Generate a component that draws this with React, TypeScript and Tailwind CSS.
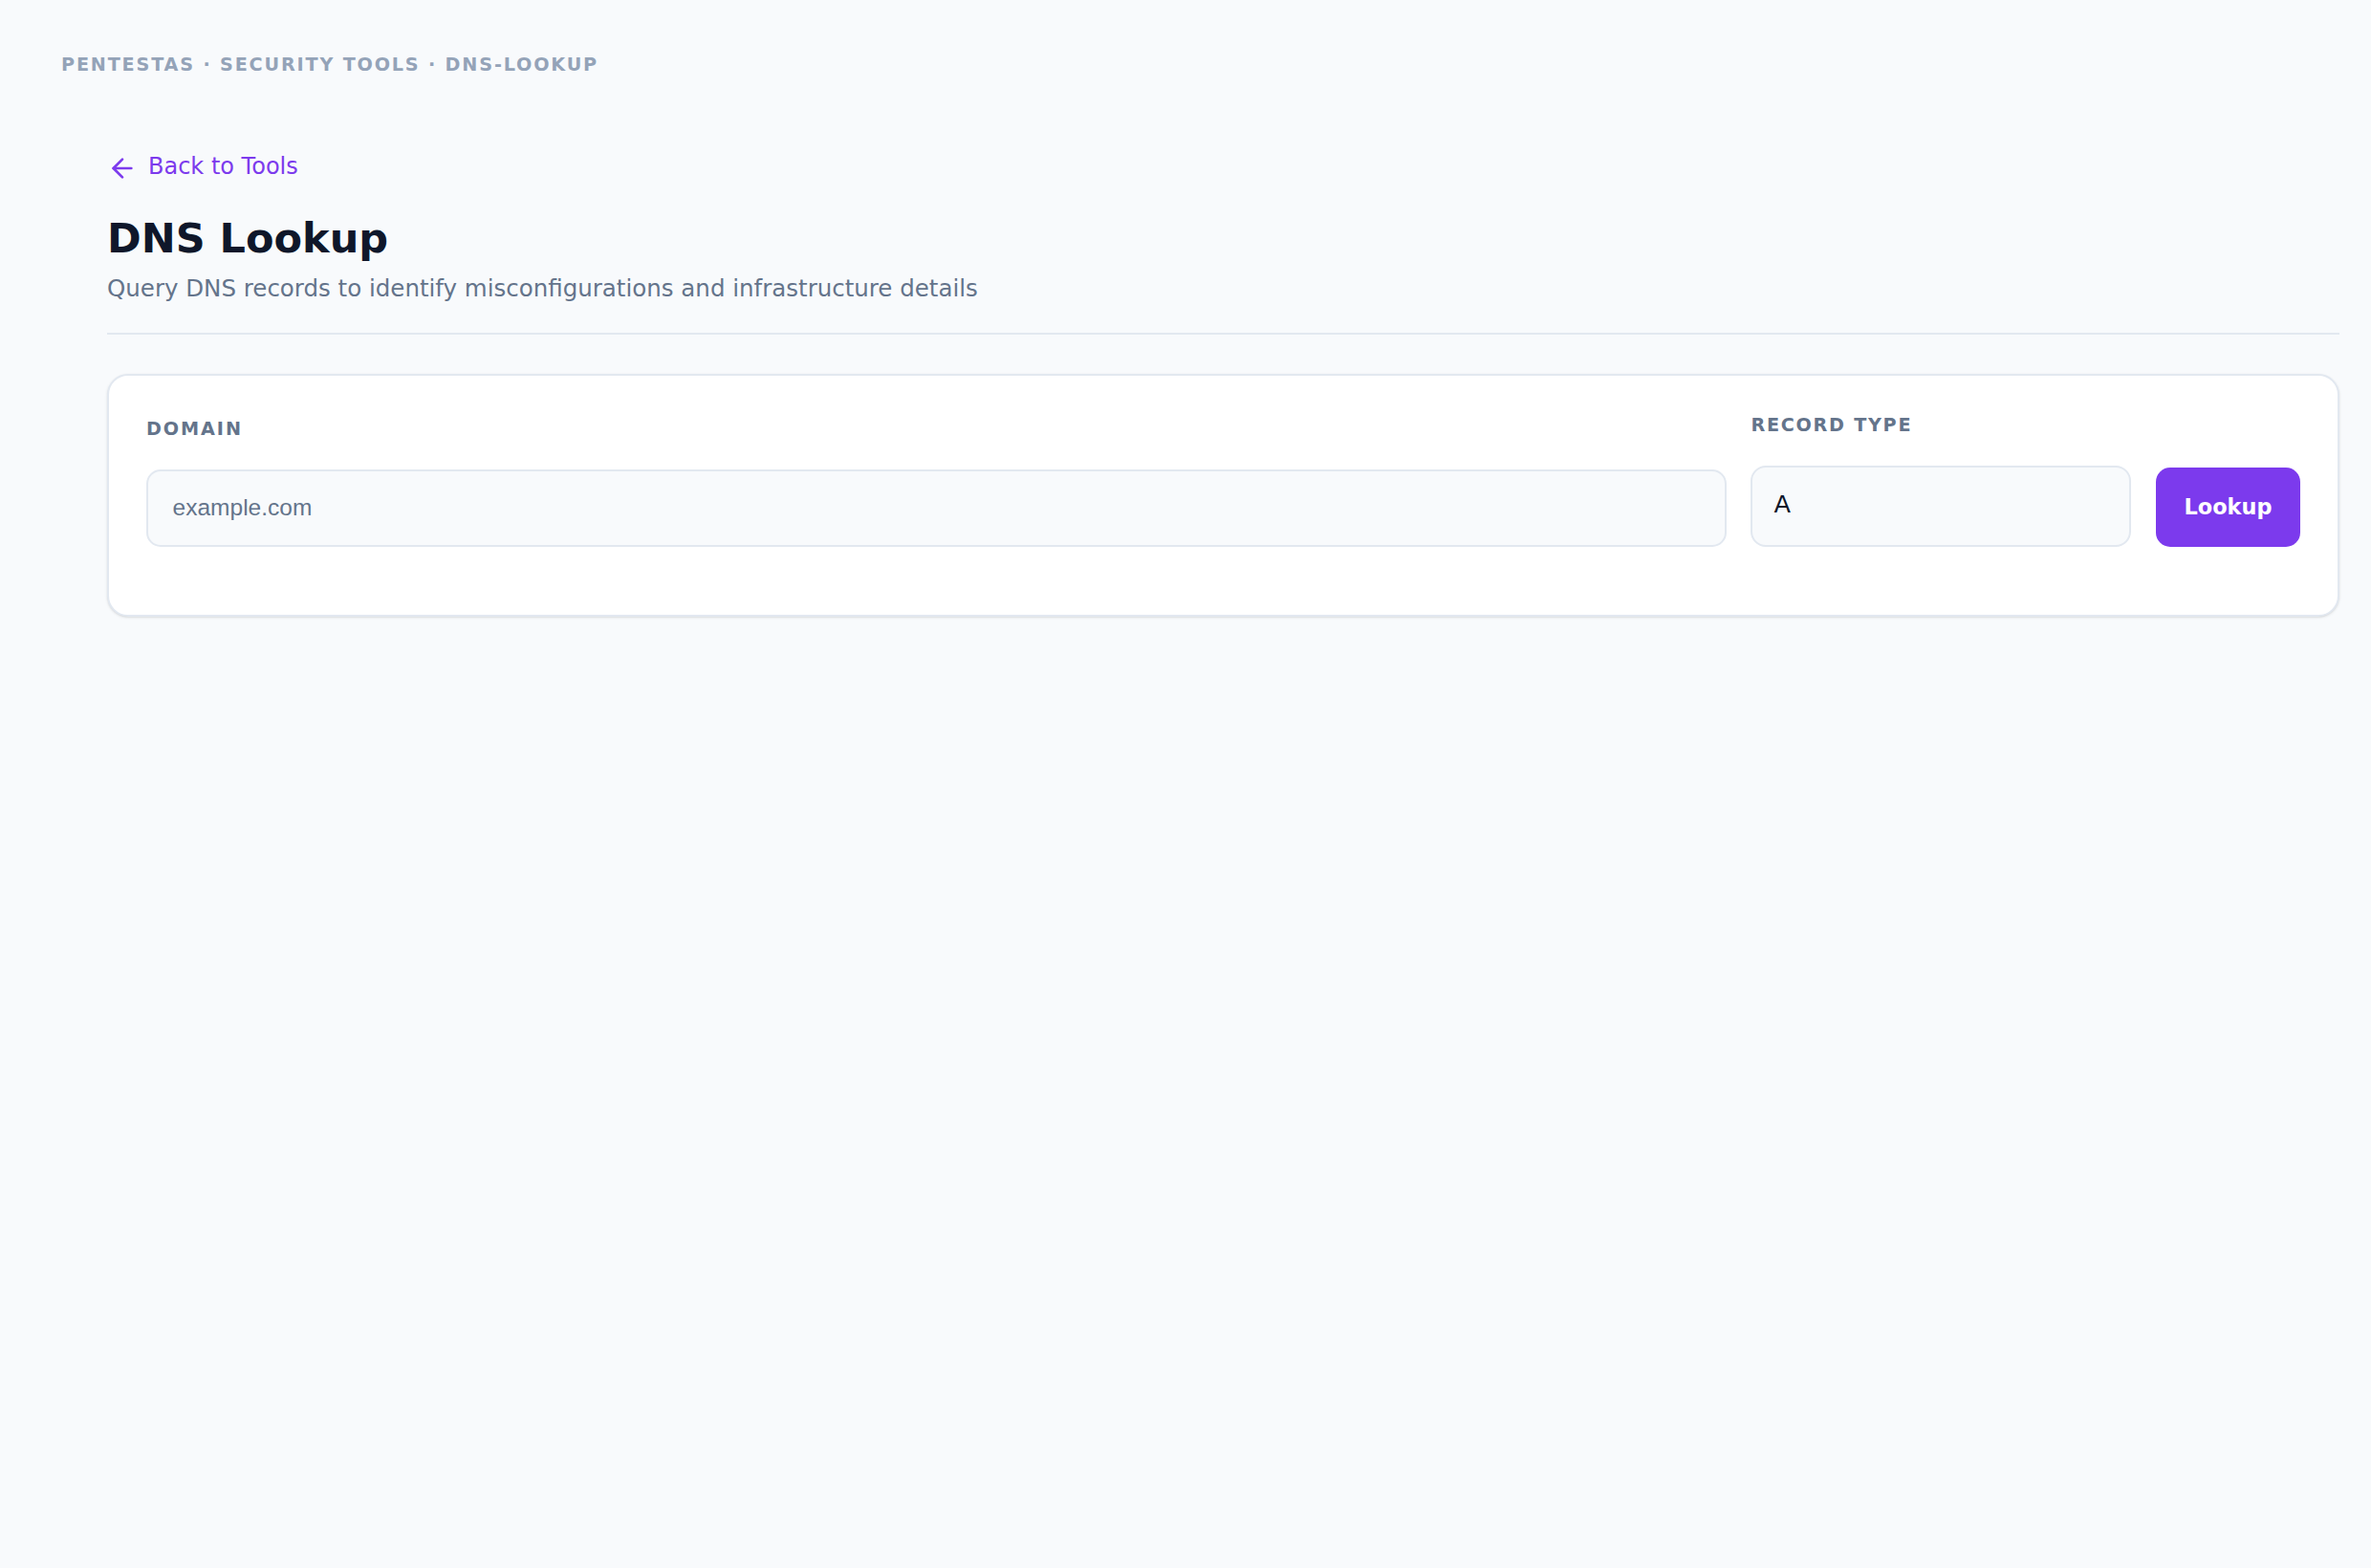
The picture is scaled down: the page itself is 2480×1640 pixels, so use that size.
import { ArrowLeft } from 'lucide-react';

const recordTypes = ['A', 'AAAA', 'MX', 'NS', 'TXT', 'CNAME', 'SOA'];

export default function App() {
  return (
    <div className="min-h-screen bg-[#f8fafc] pt-[58px] font-['DejaVu_Sans',sans-serif]">
      {/* Breadcrumb */}
      <div className="pl-[64px] text-[19.2px] leading-none font-bold uppercase tracking-[0.095em] text-[#94a3b8]">
        Pentestas · Security Tools · dns-lookup
      </div>

      <main className="pl-[112px] pr-[33px]">
        {/* Back link */}
        <a href="#" className="mt-[83px] flex items-start gap-[11px] text-[#7c3aed]">
          <ArrowLeft className="w-[32px] h-[32px] shrink-0" strokeWidth={2} />
          <span className="mt-[2px] text-[24px] leading-[25px]">Back to Tools</span>
        </a>

        {/* Header */}
        <div className="border-b-2 border-[#e2e8f0] pb-[33px]">
          <h1 className="mt-[36px] text-[43px] leading-none font-bold text-[#0f172a]">DNS Lookup</h1>
          <p className="mt-[19px] text-[24.5px] leading-none text-[#64748b]">
            Query DNS records to identify misconfigurations and infrastructure details
          </p>
        </div>

        {/* Form card */}
        <div className="mt-[41px] bg-white border-2 border-[#e2e8f0] rounded-[22px] shadow-sm px-[39px] pt-[42px] pb-[71px]">
          <div className="flex items-end gap-[25.6px]">
            <div className="flex-1 flex flex-col">
              <label className="block text-[19.2px] leading-none font-bold uppercase tracking-[0.1em] text-[#64748b] mb-[33px]">
                Domain
              </label>
              <input
                type="text"
                placeholder="example.com"
                className="h-[81px] w-full px-[25.6px] bg-[#f8fafc] border-2 border-[#e2e8f0] rounded-[15px] text-[24.5px] font-['Liberation_Sans',Arial,sans-serif] text-[#0f172a] placeholder:text-[#64748b] outline-none"
              />
            </div>
            <div className="w-[398px] flex flex-col">
              <label className="block text-[19.2px] leading-none font-bold uppercase tracking-[0.09em] text-[#64748b] mb-[33px]">
                Record Type
              </label>
              <select
                defaultValue="A"
                className="h-[85px] w-full pl-[22px] pr-[25.6px] pb-[4px] appearance-none bg-[#f8fafc] border-2 border-[#e2e8f0] rounded-[16px] text-[25.6px] text-[#0f172a] outline-none"
              >
                {recordTypes.map((r) => (
                  <option key={r} value={r}>
                    {r}
                  </option>
                ))}
              </select>
            </div>
            <button className="h-[83px] w-[151px] bg-[#7c3aed] text-white text-[22.4px] font-bold rounded-[15px]">
              Lookup
            </button>
          </div>
        </div>
      </main>
    </div>
  );
}
